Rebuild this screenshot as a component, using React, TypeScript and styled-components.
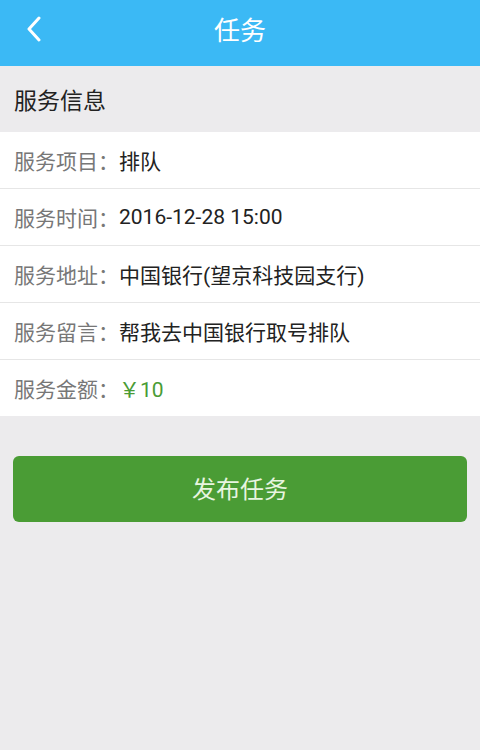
import React from 'react';
import styled, { createGlobalStyle } from 'styled-components';

const GlobalStyle = createGlobalStyle`
  html, body {
    margin: 0;
    padding: 0;
    background: #ecebed;
    font-family: Roboto, "Noto Sans CJK SC", "Noto Sans", sans-serif;
  }
`;

const Page = styled.div`
  width: 480px;
  min-height: 750px;
  background: #ecebed;
`;

const Header = styled.header`
  box-sizing: border-box;
  height: 66px;
  padding-bottom: 10px;
  background: #3bb9f5;
  display: flex;
  align-items: center;
  justify-content: center;
  position: relative;
`;

const BackButton = styled.button`
  position: absolute;
  left: 20px;
  top: 14px;
  width: 28px;
  height: 30px;
  padding: 0;
  border: none;
  background: none;
  display: flex;
  align-items: center;
  justify-content: center;
`;

const Title = styled.h1`
  margin: 0;
  font-size: 26px;
  font-weight: 400;
  color: #ffffff;
`;

const SectionTitle = styled.div`
  height: 66px;
  padding: 0 14px;
  display: flex;
  align-items: center;
  font-size: 23px;
  color: #222;
`;

const List = styled.div`
  background: #ffffff;
`;

const Row = styled.div<{ $last?: boolean }>`
  height: 56px;
  padding: 0 14px;
  display: flex;
  align-items: center;
  font-size: 21px;
  border-bottom: ${(p) => (p.$last ? 'none' : '1px solid #e6e6e6')};
`;

const Label = styled.span`
  color: #777;
`;

const Value = styled.span<{ $accent?: boolean }>`
  color: ${(p) => (p.$accent ? '#4a9c35' : '#222')};
`;

const Actions = styled.div`
  padding: 40px 13px 0;
`;

const PublishButton = styled.button`
  width: 100%;
  height: 66px;
  padding: 0 0 4px;
  border: none;
  border-radius: 6px;
  background: #4a9c35;
  color: #e8f5e0;
  font-family: inherit;
  font-size: 24px;
`;

const rows = [
  { label: '服务项目：', value: '排队' },
  { label: '服务时间：', value: '2016-12-28 15:00' },
  { label: '服务地址：', value: '中国银行(望京科技园支行)' },
  { label: '服务留言：', value: '帮我去中国银行取号排队' },
  { label: '服务金额：', value: '￥10', accent: true },
];

const App: React.FC = () => {
  return (
    <Page>
      <GlobalStyle />
      <Header>
        <BackButton aria-label="返回">
          <svg width="16" height="26" viewBox="0 0 16 26" fill="none">
            <path d="M13 2 L3 13 L13 24" stroke="#ffffff" strokeWidth="3" strokeLinecap="round" strokeLinejoin="round" />
          </svg>
        </BackButton>
        <Title>任务</Title>
      </Header>
      <SectionTitle>服务信息</SectionTitle>
      <List>
        {rows.map((r, i) => (
          <Row key={r.label} $last={i === rows.length - 1}>
            <Label>{r.label}</Label>
            <Value $accent={r.accent}>{r.value}</Value>
          </Row>
        ))}
      </List>
      <Actions>
        <PublishButton>发布任务</PublishButton>
      </Actions>
    </Page>
  );
};

export default App;
